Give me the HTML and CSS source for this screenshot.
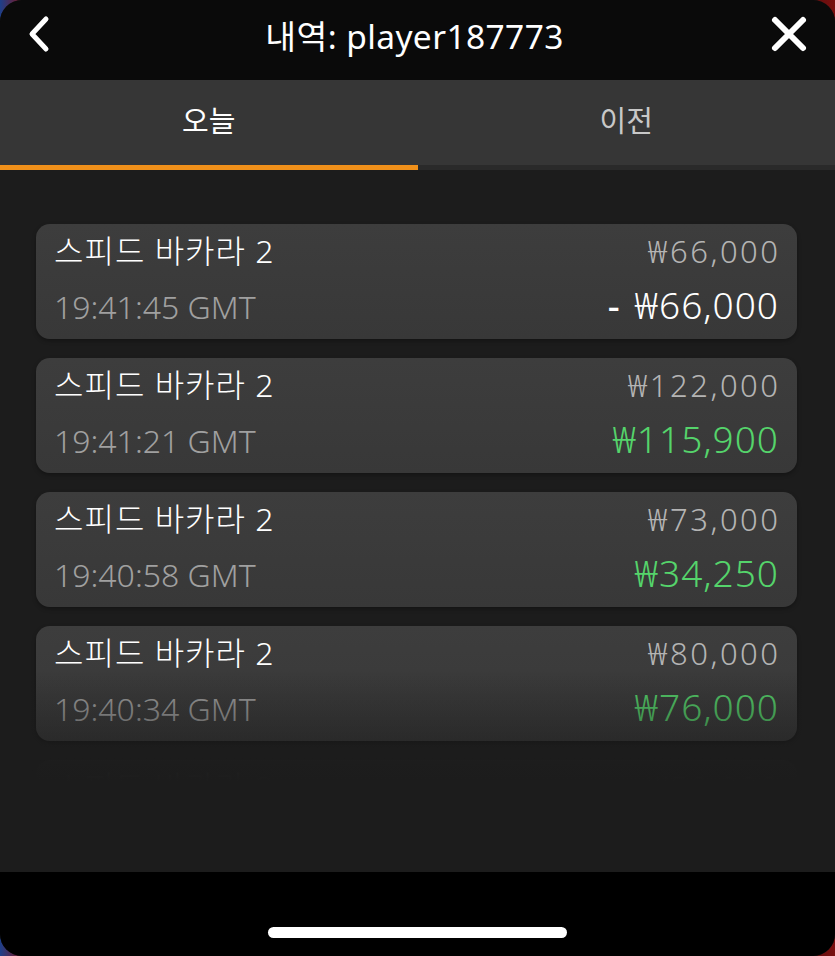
FILE: index.html
```html
<!DOCTYPE html>
<html>
<head>
    <link rel="stylesheet" href="styles.css">
</head>
<body>

    <div class="screen">
        <div class="header">
            <svg class="icon back" width="40" height="40" viewBox="0 0 40 40">
                <path d="M26 5 L12 20 L26 35" fill="none" stroke="#fff" stroke-width="5" stroke-linecap="round" stroke-linejoin="round"/>
            </svg>
            <h2 class="title">내역: player187773</h2>
            <svg class="icon close" width="40" height="40" viewBox="0 0 40 40">
                <path d="M6 6 L34 34 M34 6 L6 34" fill="none" stroke="#fff" stroke-width="6" stroke-linecap="round"/>
            </svg>
        </div>

        <div class="tabs">
            <div class="tab active">오늘</div>
            <div class="tab">이전</div>
        </div>

        <div class="list">
            <div class="card">
                <div class="row">
                    <span class="game">스피드 바카라 2</span>
                    <span class="bet">₩66,000</span>
                </div>
                <div class="row">
                    <span class="time">19:41:45 GMT</span>
                    <span class="win"><span class="minus">-</span>₩66,000</span>
                </div>
            </div>
            <div class="card">
                <div class="row">
                    <span class="game">스피드 바카라 2</span>
                    <span class="bet">₩122,000</span>
                </div>
                <div class="row">
                    <span class="time">19:41:21 GMT</span>
                    <span class="win green">₩115,900</span>
                </div>
            </div>
            <div class="card">
                <div class="row">
                    <span class="game">스피드 바카라 2</span>
                    <span class="bet">₩73,000</span>
                </div>
                <div class="row">
                    <span class="time">19:40:58 GMT</span>
                    <span class="win green">₩34,250</span>
                </div>
            </div>
            <div class="card">
                <div class="row">
                    <span class="game">스피드 바카라 2</span>
                    <span class="bet">₩80,000</span>
                </div>
                <div class="row">
                    <span class="time">19:40:34 GMT</span>
                    <span class="win green">₩76,000</span>
                </div>
            </div>
            <div class="card">
                <div class="row">
                    <span class="game">스피드 바카라 2</span>
                    <span class="bet">₩50,000</span>
                </div>
                <div class="row">
                    <span class="time">19:40:10 GMT</span>
                    <span class="win green">₩47,500</span>
                </div>
            </div>
            <div class="fade"></div>
        </div>

        <div class="footer">
            <div class="home-bar"></div>
        </div>
    </div>

</body>
</html>
```

FILE: styles.css
```css
body {
    margin: 0;
    background: linear-gradient(90deg, #1d3f8a 0%, #8a1010 3%, #111 10%, #111 90%, #7a0e0e 100%);
    font-family: "Noto Sans", "Noto Sans CJK KR", sans-serif;
    color: #fff;
}
.screen {
    width: 835px;
    height: 956px;
    display: flex;
    flex-direction: column;
    overflow: hidden;
    border-radius: 22px;
    background-color: #1c1c1c;
}
.header {
    height: 80px;
    background-color: #0a0a0a;
    display: flex;
    align-items: center;
    justify-content: space-between;
    padding: 0 26px 12px 20px;
    box-sizing: border-box;
}
.icon {
    display: block;
}
.title {
    margin: 0;
    font-weight: 400;
    font-size: 33.5px;
    letter-spacing: 0.4px;
}
.tabs {
    display: flex;
    height: 90px;
    background-color: #363636;
    border-bottom: 5px solid #2a2a2a;
    box-sizing: border-box;
}
.tab {
    flex: 1;
    display: flex;
    align-items: center;
    justify-content: center;
    padding-bottom: 8px;
    font-family: "Noto Sans CJK KR", sans-serif;
    font-size: 29px;
    color: #c8c8c8;
    margin-bottom: -5px;
    border-bottom: 5px solid transparent;
}
.tab.active {
    color: #fff;
    border-bottom-color: #f0901a;
}
.list {
    position: relative;
    flex: 1;
    padding: 54px 38px 0 36px;
    display: flex;
    flex-direction: column;
    gap: 19px;
    overflow: hidden;
}
.card {
    flex-shrink: 0;
    height: 115px;
    box-sizing: border-box;
    padding: 0 19px 0 18px;
    border-radius: 14px;
    background: linear-gradient(#3d3d3d, #383838);
    box-shadow: 0 2px 4px rgba(0, 0, 0, 0.3);
}
.row {
    display: flex;
    justify-content: space-between;
    align-items: baseline;
    height: 54px;
    line-height: 54px;
}
.game {
    font-size: 32px;
    font-weight: 300;
    letter-spacing: 1px;
    color: #fff;
}
.time {
    font-size: 32px;
    font-weight: 300;
    color: #a0a0a0;
}
.bet {
    font-size: 31px;
    font-weight: 300;
    letter-spacing: 2.5px;
    margin-right: -2.5px;
    color: #b4b4b4;
}
.win {
    font-size: 37px;
    font-weight: 300;
    letter-spacing: 1px;
    margin-right: -1px;
    color: #fff;
}
.minus {
    font-weight: 500;
    margin-right: 14px;
}
.win.green {
    color: #55d46b;
}
.fade {
    position: absolute;
    left: 0;
    right: 0;
    bottom: 0;
    height: 202px;
    background: linear-gradient(rgba(28, 28, 28, 0) 0%, rgba(28, 28, 28, 0.5) 35%, rgba(28, 28, 28, 0.97) 45%, #1c1c1c 55%);
}
.footer {
    height: 84px;
    background-color: #000;
    display: flex;
    justify-content: center;
    align-items: flex-start;
}
.home-bar {
    width: 299px;
    height: 11px;
    margin-top: 55px;
    border-radius: 6px;
    background-color: #fff;
}
```
